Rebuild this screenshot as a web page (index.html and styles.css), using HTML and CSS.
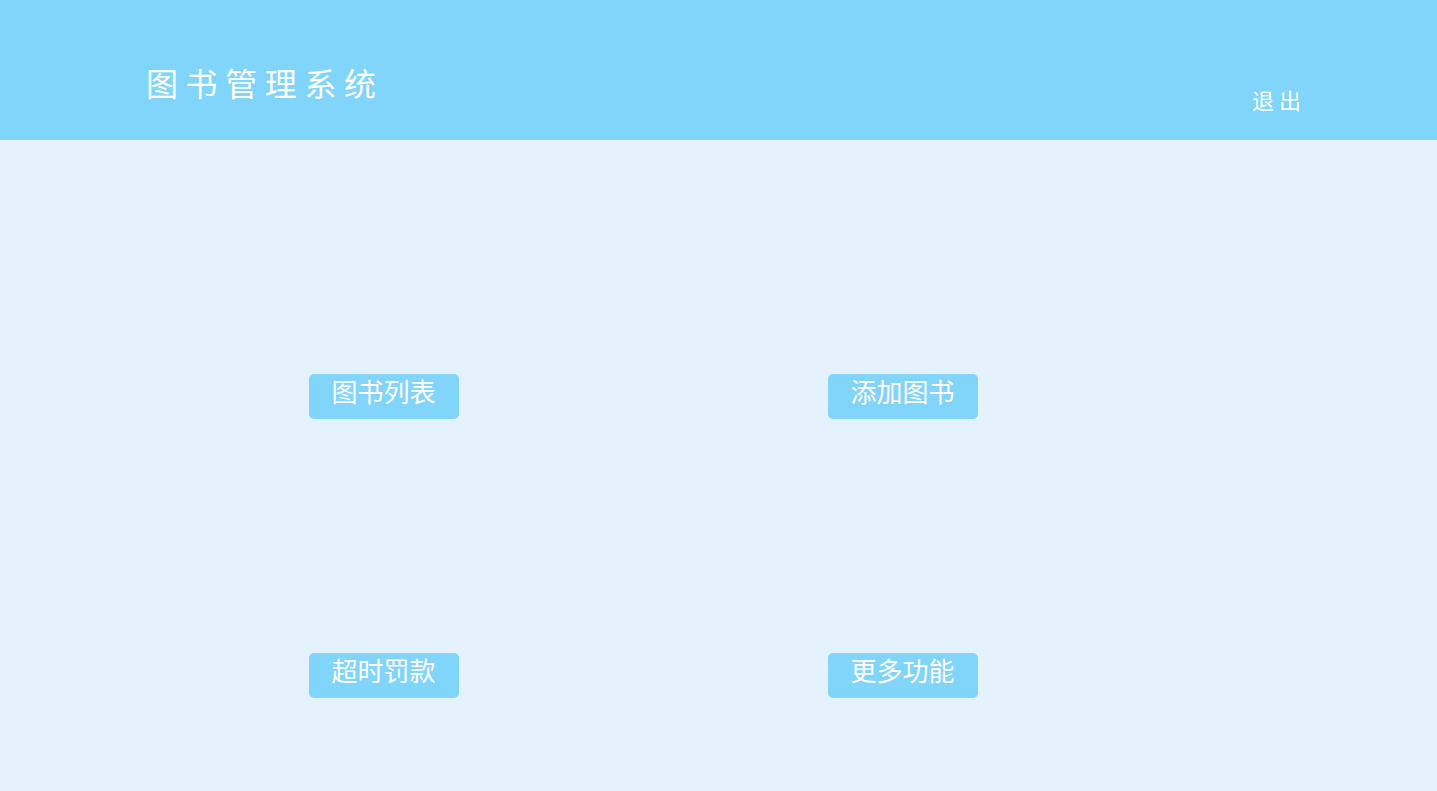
FILE: index.html
```html
<!DOCTYPE html>
<html lang="zh">
<head>
<meta charset="utf-8">
<title>图书管理系统</title>
<link rel="stylesheet" href="styles.css">
</head>
<body>
<header class="header">
  <h1 class="title">图书管理系统</h1>
  <a class="logout">退出</a>
</header>
<main class="menu">
  <div class="cell"><div class="btn">图书列表</div></div>
  <div class="cell"><div class="btn">添加图书</div></div>
  <div class="cell"><div class="btn">超时罚款</div></div>
  <div class="cell"><div class="btn">更多功能</div></div>
</main>
</body>
</html>
```
FILE: styles.css
```css
html, body {
  margin: 0;
  padding: 0;
  height: 100%;
}
body {
  background: #e3f2fd;
  font-family: "Noto Sans CJK SC", "Noto Sans", sans-serif;
  overflow: hidden;
}
.header {
  height: 140px;
  background: #81d4fa;
  display: flex;
  justify-content: space-between;
  align-items: flex-start;
  padding: 0 131px 0 146px;
  box-sizing: border-box;
  color: #fff;
}
.title {
  margin: 59px 0 0 0;
  font-size: 32px;
  font-weight: normal;
  letter-spacing: 7.6px;
  line-height: normal;
}
.logout {
  margin-top: 83px;
  font-size: 22px;
  letter-spacing: 5px;
  line-height: 32px;
  cursor: pointer;
}
.menu {
  display: grid;
  grid-template-columns: 519px 519px;
  grid-auto-rows: 279px;
  padding: 117px 0 0 124px;
}
.cell {
  display: flex;
  align-items: center;
  justify-content: center;
}
.btn {
  width: 150px;
  height: 45px;
  background: #81d4fa;
  border-radius: 5px;
  color: #fff;
  font-size: 26px;
  line-height: 34px;
  text-align: center;
}
```
